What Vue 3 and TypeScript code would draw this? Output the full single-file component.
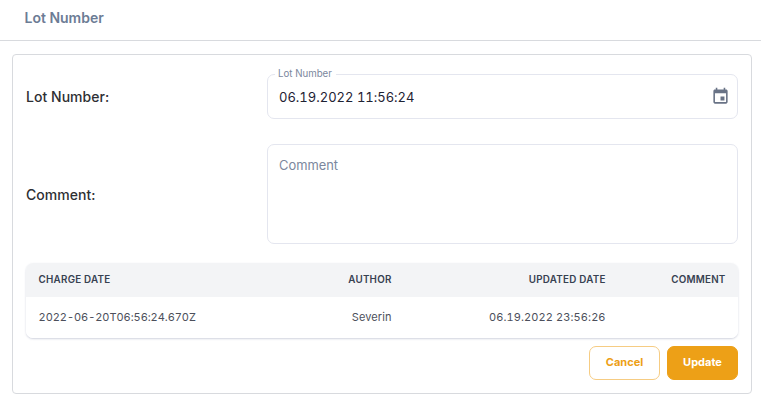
<script setup lang="ts">
import { ref } from 'vue'

interface LogEntry {
  chargeDate: string
  author: string
  updatedDate: string
  comment: string
}

const lotNumber = ref('06.19.2022 11:56:24')
const comment = ref('')
const entries: LogEntry[] = [
  {
    chargeDate: '2022-06-20T06:56:24.670Z',
    author: 'Severin',
    updatedDate: '06.19.2022 23:56:26',
    comment: '',
  },
]
</script>

<template>
  <div class="dialog">
    <header class="title"><span>Lot Number</span></header>
    <main class="card">
      <div class="row row-lot">
        <label class="row-label" for="lot">Lot Number:</label>
        <div class="field">
          <span class="float-label">Lot Number</span>
          <input id="lot" v-model="lotNumber" class="input" type="text" />
          <svg class="calendar" viewBox="0 0 24 24" aria-hidden="true">
            <path
              d="M17 12h-5v5h5v-5zM16 1v2H8V1H6v2H5c-1.11 0-1.99.9-1.99 2L3 19c0 1.1.89 2 2 2h14c1.1 0 2-.9 2-2V5c0-1.1-.9-2-2-2h-1V1h-2zm3 18H5V8h14v11z"
            />
          </svg>
        </div>
      </div>
      <div class="row row-comment">
        <label class="row-label" for="comment">Comment:</label>
        <textarea id="comment" v-model="comment" class="area" placeholder="Comment"></textarea>
      </div>
      <div class="log">
        <div class="log-row log-head">
          <span>Charge Date</span>
          <span>Author</span>
          <span>Updated Date</span>
          <span>Comment</span>
        </div>
        <div v-for="entry in entries" :key="entry.chargeDate" class="log-row log-body">
          <span class="stamp">{{ entry.chargeDate }}</span>
          <span>{{ entry.author }}</span>
          <span class="stamp updated">{{ entry.updatedDate }}</span>
          <span>{{ entry.comment }}</span>
        </div>
      </div>
      <div class="actions">
        <button class="btn cancel" type="button">Cancel</button>
        <button class="btn update" type="button">Update</button>
      </div>
    </main>
  </div>
</template>

<style>
body {
  background: #fff;
}
</style>

<style scoped>
.dialog,
.dialog * {
  box-sizing: border-box;
}
.dialog {
  height: 405px;
  overflow: hidden;
  font-family: Inter, 'Liberation Sans', sans-serif;
}
.title {
  display: flex;
  height: 41px;
  padding: 9px 24.5px 0;
  border-bottom: 1px solid #d8dade;
  color: #6c7c95;
  font-size: 14px;
  font-weight: 600;
  line-height: 18px;
}
.card {
  display: flex;
  flex-direction: column;
  width: 740px;
  height: 340px;
  margin: 13px 0 0 12px;
  padding: 19px 13px 0;
  border: 1px solid #d8dade;
  border-radius: 4px;
}
.row {
  display: grid;
  grid-template-columns: 241px 471px;
  align-items: center;
}
.row-lot {
  height: 45px;
}
.row-comment {
  height: 100px;
  margin-top: 25px;
}
.row-label {
  color: #2e2f33;
  font-size: 14px;
  font-weight: 500;
  letter-spacing: 0.04px;
}
.field {
  position: relative;
  display: flex;
  align-items: center;
  height: 45px;
  padding: 0 7px 0 11px;
  border: 1px solid #e4e6ef;
  border-radius: 7px;
}
.float-label {
  position: absolute;
  top: -8px;
  left: 7px;
  padding: 0 4px 0 3px;
  background: #fff;
  color: #7b879d;
  font-size: 9.7px;
  line-height: 14px;
}
.input {
  flex: 1;
  min-width: 0;
  padding: 0;
  border: 0;
  outline: 0;
  background: none;
  color: #1e2233;
  font: 400 13px/20px Inter, 'Liberation Sans', sans-serif;
  font-feature-settings: 'calt' 0, 'tnum' 1;
}
.calendar {
  width: 19px;
  height: 19px;
  fill: #697386;
}
.area {
  width: 100%;
  height: 100px;
  padding: 11px;
  border: 1px solid #e4e6ef;
  border-radius: 7px;
  outline: 0;
  resize: none;
  background: none;
  color: #1e2233;
  font: 400 12.9px/20px Inter, 'Liberation Sans', sans-serif;
}
.area::placeholder {
  color: #7b879d;
  opacity: 1;
}
.log {
  width: 712px;
  margin-top: 19px;
  overflow: hidden;
  border-radius: 7px;
  box-shadow: 0 1px 2px rgba(100, 110, 145, 0.3);
}
.log-row {
  display: grid;
  grid-template-columns: 197px 156px 214px 120px;
  align-items: center;
  padding-left: 12.6px;
  text-align: right;
}
.log-row span:first-child {
  text-align: left;
}
.log-head {
  height: 34px;
  padding-bottom: 1px;
  background: #f3f4f6;
  color: #374151;
  font-size: 9.8px;
  font-weight: 600;
  letter-spacing: 0.25px;
  text-transform: uppercase;
}
.log-body {
  height: 41px;
  padding-bottom: 1px;
  background: #fff;
  color: #4c4f5b;
  font-size: 11px;
  letter-spacing: 0.1px;
}
.stamp {
  font-feature-settings: 'calt' 0, 'tnum' 1;
  letter-spacing: -0.05px;
}
.updated {
  letter-spacing: 0.1px;
}
.actions {
  display: flex;
  justify-content: flex-end;
  gap: 7px;
  margin-top: 8px;
}
.btn {
  width: 71px;
  height: 34px;
  padding: 0 0 2px;
  border: 1px solid #f6cc83;
  border-radius: 7px;
  background: #fff;
  color: #eda017;
  font: 700 11px/18px Inter, 'Liberation Sans', sans-serif;
}
.update {
  border-color: #eda017;
  background: #eda017;
  color: #fff;
}
</style>
